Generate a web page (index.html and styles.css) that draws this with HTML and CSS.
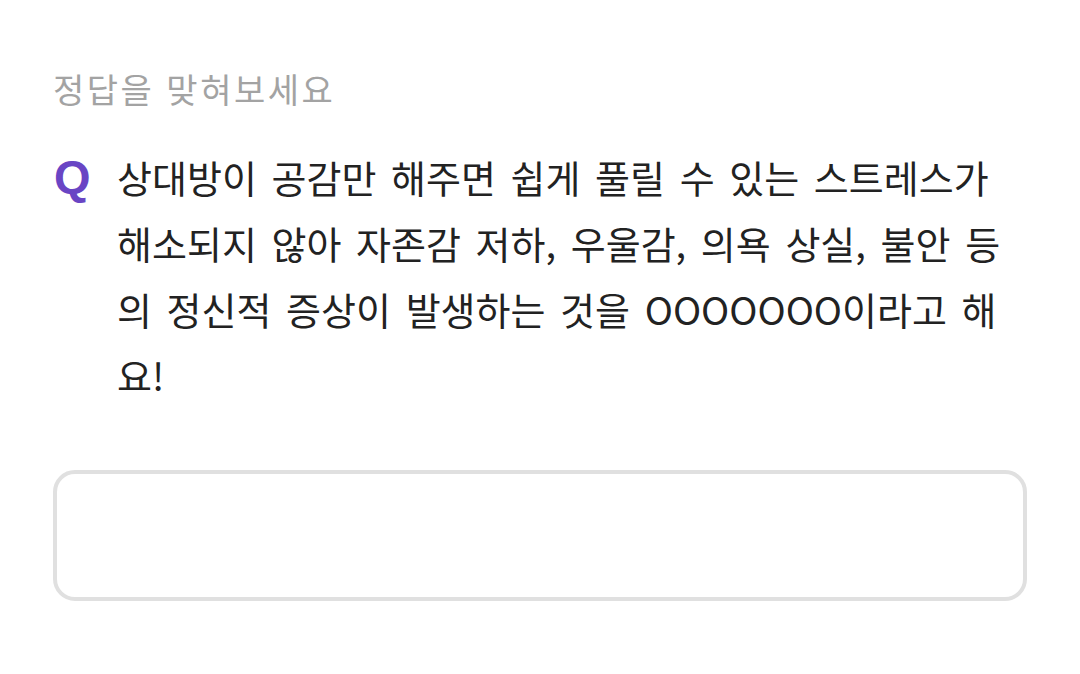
FILE: index.html
```html
<!DOCTYPE html>
<html lang="ko">
  <head>
    <meta charset="utf-8">
    <link rel="stylesheet" href="styles.css">
  </head>
  <body>
    <div class="quiz">
      <h2 class="quiz-title">정답을 맞혀보세요</h2>

      <div class="question">
        <span class="q-mark">Q</span>
        <p class="q-text">상대방이 공감만 해주면 쉽게 풀릴 수 있는 스트레스가 해소되지 않아 자존감 저하, 우울감, 의욕 상실, 불안 등의 정신적 증상이 발생하는 것을 OOOOOOO이라고 해요!</p>
      </div>

      <div class="answer-box">
        <input type="text" class="answer-input" />
      </div>
    </div>
  </body>
</html>
```

FILE: styles.css
```css
body {
  margin: 0;
  background: #fff;
  font-family: "Noto Sans CJK KR", "Noto Sans", sans-serif;
  color: #222;
}
.quiz {
  padding: 67px 53px 0 53px;
}
.quiz-title {
  margin: 0;
  font-size: 34px;
  font-weight: 400;
  letter-spacing: 2.5px;
  color: #a3a3a3;
  line-height: 44px;
}
.question {
  display: flex;
  margin-top: 33px;
}
.q-mark {
  width: 64px;
  flex-shrink: 0;
  padding-left: 1px;
  box-sizing: border-box;
  font-family: "Liberation Sans", sans-serif;
  font-weight: 700;
  font-size: 47px;
  color: #6945c4;
  line-height: 66px;
}
.q-text {
  margin: 0 9px 0 0;
  font-size: 38px;
  line-height: 66px;
  word-spacing: 4px;
  word-break: break-all;
  color: #222;
}
.answer-box {
  margin-top: 62px;
}
.answer-input {
  box-sizing: border-box;
  width: 100%;
  height: 131px;
  border: 4px solid #e0e0e0;
  border-radius: 22px;
  outline: none;
  font-size: 32px;
  padding: 0 24px;
}
```
